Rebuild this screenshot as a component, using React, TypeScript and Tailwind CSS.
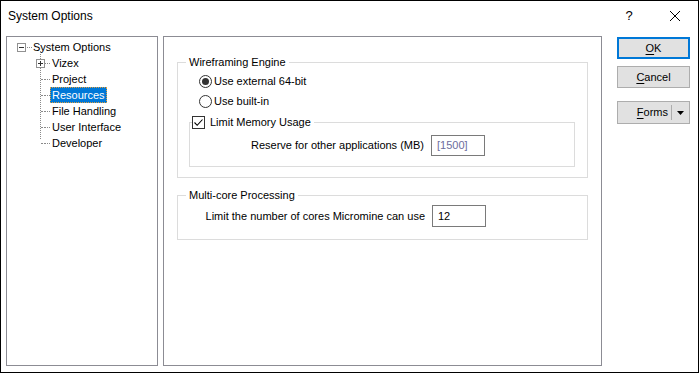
import { useState } from 'react'

const font = { fontFamily: '"Segoe UI", "Liberation Sans", Arial, sans-serif' }

type Node = { label: string; expand?: boolean }

const children: Node[] = [
  { label: 'Vizex', expand: true },
  { label: 'Project' },
  { label: 'Resources' },
  { label: 'File Handling' },
  { label: 'User Interface' },
  { label: 'Developer' },
]

function ExpandBox({ plus }: { plus?: boolean }) {
  return (
    <div className="relative w-[9px] h-[9px] border border-[#919191] bg-white">
      <div className="absolute left-[1px] top-[3px] w-[5px] h-px bg-[#333]" />
      {plus && <div className="absolute left-[3px] top-[1px] w-px h-[5px] bg-[#333]" />}
    </div>
  )
}

function Tree() {
  const [selected, setSelected] = useState('Resources')
  return (
    <div className="relative pt-[2px] pl-[10px] text-[11px] text-black">
      {/* root */}
      <div className="flex items-center h-[16px]">
        <ExpandBox />
        <div className="w-[5px] border-t border-dotted border-[#8a8a8a] ml-px" />
        <span className="ml-[1px]">System Options</span>
      </div>
      {/* vertical connector */}
      <div className="absolute left-[33px] top-[14px] h-[88px] border-l border-dotted border-[#8a8a8a]" />
      {children.map((c) => (
        <div key={c.label} className="flex items-center h-[16px] pl-[19px]">
          <div className="relative w-[9px] h-[9px] flex items-center">
            {c.expand ? (
              <ExpandBox plus />
            ) : (
              <div className="ml-[5px] w-[4px] border-t border-dotted border-[#8a8a8a]" />
            )}
          </div>
          <div className="w-[5px] border-t border-dotted border-[#8a8a8a]" />
          <span
            onClick={() => setSelected(c.label)}
            className={
              selected === c.label
                ? 'px-[2px] h-[16px] leading-[16px] bg-[#0078d7] text-white outline-1 outline-dotted outline-[#e0a040] -outline-offset-1'
                : 'px-[2px] leading-[16px]'
            }
          >
            {c.label}
          </span>
        </div>
      ))}
    </div>
  )
}

function Radio({ checked, label }: { checked?: boolean; label: string }) {
  return (
    <div className="flex items-center h-[20px] gap-[2px]">
      <div className="w-[13px] h-[13px] rounded-full border border-[#333] bg-white flex items-center justify-center">
        {checked && <div className="w-[7px] h-[7px] rounded-full bg-[#333]" />}
      </div>
      <span>{label}</span>
    </div>
  )
}

function Button({ children, primary }: { children: React.ReactNode; primary?: boolean }) {
  return (
    <div
      className={
        primary
          ? 'h-[22px] border-2 border-[#0078d7] bg-[#e1e1e1] flex items-center justify-center'
          : 'h-[22px] border border-[#adadad] bg-[#e1e1e1] flex items-center justify-center'
      }
    >
      {children}
    </div>
  )
}

export default function App() {
  return (
    <div
      style={font}
      className="w-[699px] h-[373px] border border-black bg-white flex flex-col text-[11px] text-black box-border"
    >
      {/* title bar */}
      <div className="h-[30px] flex items-center pl-[7px] shrink-0">
        <span className="text-[12px] flex-1">System Options</span>
        <span className="w-[46px] text-center text-[13px]">?</span>
        <svg width="46" height="14" viewBox="0 0 46 14">
          <path d="M18 2 L28 12 M28 2 L18 12" stroke="#000" strokeWidth="1" />
        </svg>
      </div>

      <div className="flex flex-1 pl-[5px] pt-[5px] pb-[6px]">
        {/* tree panel */}
        <div className="w-[152px] border border-[#8c8c94] bg-white">
          <Tree />
        </div>

        {/* options panel */}
        <div className="ml-[5px] w-[439px] border border-[#8c8c94] bg-white px-[13px] pt-[18px]">
          {/* Wireframing Engine */}
          <fieldset className="border border-[#dcdcdc] w-[411px] h-[123px] px-[8px] pb-0">
            <legend className="px-[3px] leading-[14px]">Wireframing Engine</legend>
            <div className="pl-[13px] pt-[2px]">
              <Radio checked label="Use external 64-bit" />
              <Radio label="Use built-in" />
            </div>
            <fieldset className="mt-[4px] ml-[3px] border border-[#dcdcdc] w-[386px] h-[52px] pl-0">
              <legend className="ml-[2px] flex items-center gap-[5px] pr-[3px] leading-[14px]">
                <span className="w-[13px] h-[13px] border border-[#333] bg-white flex items-center justify-center">
                  <svg width="11" height="11" viewBox="0 0 11 11">
                    <path d="M1.5 5.5 L4.2 8.3 L9.5 2.5" fill="none" stroke="#000" strokeWidth="1.1" />
                  </svg>
                </span>
                <span>Limit Memory Usage</span>
              </legend>
              <div className="flex items-center justify-end pr-[89px] gap-[7px] mt-[6px]">
                <span className="whitespace-nowrap">Reserve for other applications (MB)</span>
                <div className="w-[54px] h-[21px] border border-[#7a7a7a] bg-white pl-[5px] leading-[19px] text-[#6d6d9c]">
                  [1500]
                </div>
              </div>
            </fieldset>
          </fieldset>

          {/* Multi-core */}
          <fieldset className="mt-[10px] border border-[#dcdcdc] w-[411px] h-[52px] px-[8px]">
            <legend className="px-[3px] leading-[14px]">Multi-core Processing</legend>
            <div className="flex items-center justify-end pr-[93px] gap-[7px] mt-[3px]">
              <span className="whitespace-nowrap">Limit the number of cores Micromine can use</span>
              <div className="w-[54px] h-[22px] border border-[#7a7a7a] bg-white pl-[5px] leading-[20px]">12</div>
            </div>
          </fieldset>
        </div>

        {/* buttons */}
        <div className="ml-[15px] w-[73px] flex flex-col pt-[1px]">
          <Button primary>
            <span className="underline underline-offset-2">O</span>K
          </Button>
          <div className="mt-[7px]">
            <Button>
              <span className="underline underline-offset-2">C</span>ancel
            </Button>
          </div>
          <div className="mt-[13px] h-[23px] border border-[#adadad] bg-[#e1e1e1] flex items-center">
            <span className="flex-1 text-right pr-[3px]">
              <span className="underline underline-offset-2">F</span>orms
            </span>
            <div className="w-px h-[15px] bg-[#adadad]" />
            <div className="w-[17px] flex items-center justify-center">
              <svg width="7" height="4" viewBox="0 0 7 4">
                <path d="M0 0 H7 L3.5 4 Z" fill="#000" />
              </svg>
            </div>
          </div>
        </div>
      </div>
    </div>
  )
}
